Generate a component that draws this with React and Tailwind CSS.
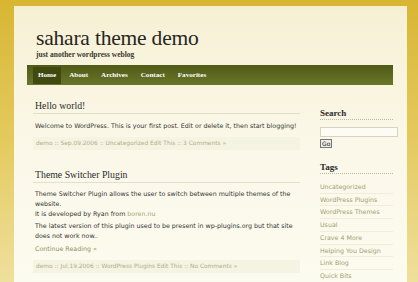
const serif = { fontFamily: '"Liberation Serif", "Times New Roman", serif' }
const sans = { fontFamily: '"DejaVu Sans", Verdana, sans-serif' }

const navItems = ['Home', 'About', 'Archives', 'Contact', 'Favorites']
const tags = [
  'Uncategorized',
  'WordPress Plugins',
  'WordPress Themes',
  'Usual',
  'Crave 4 More',
  'Helping You Design',
  'Link Blog',
  'Quick Bits',
]

function PostTitle({ children, className = '' }) {
  return (
    <h2
      className={`pl-[2px] text-[9.8px] leading-[12px] text-[#2b2b2b] border-b border-[#e2dfca] pb-[1px] ${className}`}
      style={serif}
    >
      {children}
    </h2>
  )
}

function Meta({ children }) {
  return (
    <div className="mt-[6px] h-[13px] bg-[#f5f3e1] pl-[3px] text-[5.9px] leading-[13px] text-[#b3ae8e]" style={sans}>
      {children}
    </div>
  )
}

export default function App() {
  return (
    <div className="w-[418px] h-[282px] overflow-hidden bg-linear-to-b from-[#d8b631] via-[#e4ca5e] to-[#efe09c]">
      <div className="ml-[14px] mt-[6px] w-[393px] h-[276px] bg-linear-to-b from-[#f6f0d3] via-[#fbf8e9] to-[#fcfbef]">
        {/* header */}
        <div className="pt-[21px] pl-[22px]">
          <h1 className="text-[21.5px] leading-[22px] text-[#262622] tracking-[-0.2px]" style={serif}>
            sahara theme demo
          </h1>
          <p className="mt-[2px] text-[7.5px] leading-[8px] font-bold text-[#3a3a30]" style={serif}>
            just another wordpress weblog
          </p>
        </div>

        {/* nav */}
        <nav className="mt-[6px] ml-[13px] w-[366px] h-[20px] flex items-end gap-[3px] pl-[6px] pb-[1px] bg-linear-to-b from-[#4f5a17] to-[#6a7628]">
          {navItems.map((item, i) => (
            <span
              key={item}
              className={`h-[17px] px-[5px] flex items-center text-[7.1px] font-bold text-white ${i === 0 ? 'bg-[#3f4910]' : ''}`}
              style={serif}
            >
              {item}
            </span>
          ))}
        </nav>

        <div className="flex gap-[20px] pl-[19px]">
          {/* main column */}
          <main className="w-[267px]">
            <PostTitle className="mt-[15px]">Hello world!</PostTitle>
            <p className="mt-[7px] pl-[2px] text-[6.3px] leading-[10px] text-[#333]" style={sans}>
              Welcome to WordPress. This is your first post. Edit or delete it, then start blogging!
            </p>
            <Meta>demo :: Sep.09.2006 :: Uncategorized Edit This :: 3 Comments »</Meta>

            <PostTitle className="mt-[19px]">Theme Switcher Plugin</PostTitle>
            <div className="mt-[6px] pl-[2px] text-[6.3px] leading-[10px] text-[#333]" style={sans}>
              <p>
                Theme Switcher Plugin allows the user to switch between multiple themes of the website.
                <br />
                It is developed by Ryan from <span className="text-[#aba66c]">boren.nu</span>
              </p>
              <p className="mt-[2px]">
                The latest version of this plugin used to be present in wp-plugins.org but that site does not work now..
              </p>
              <p className="mt-[3px] text-[#8f9159]">Continue Reading »</p>
            </div>
            <Meta>demo :: Jul.19.2006 :: WordPress Plugins Edit This :: No Comments »</Meta>
          </main>

          {/* sidebar */}
          <aside className="w-[73px]">
            <h3 className="mt-[23px] text-[9px] leading-[11px] font-bold text-[#2b2b2b] border-b border-dotted border-[#bdb9a0]" style={serif}>
              Search
            </h3>
            <div className="mt-[7px] w-[78px] h-[10px] border border-[#d6d3c0] bg-[#fdfcf4]" />
            <button
              className="mt-[2px] h-[9px] px-[1px] border border-[#777] bg-[#eeede6] text-[6px] leading-[7px] text-[#222] block"
              style={sans}
            >
              Go
            </button>
            <h3 className="mt-[14px] text-[9px] leading-[11px] font-bold text-[#2b2b2b] border-b border-dotted border-[#bdb9a0]" style={serif}>
              Tags
            </h3>
            <ul className="mt-[7px]">
              {tags.map(tag => (
                <li
                  key={tag}
                  className="text-[6.3px] leading-[11.7px] text-[#a29e72] border-b border-[#f0eddb]"
                  style={sans}
                >
                  {tag}
                </li>
              ))}
            </ul>
          </aside>
        </div>
      </div>
    </div>
  )
}
